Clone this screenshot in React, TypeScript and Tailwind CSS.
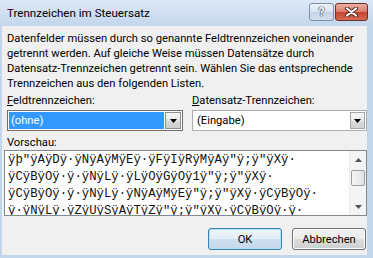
import React from "react";

function DownTri({ color = "#000" }: { color?: string }) {
  return (
    <svg width="7" height="4" viewBox="0 0 7 4">
      <path d="M0 0 H7 L3.5 4 Z" fill={color} />
    </svg>
  );
}

function UpTri({ color = "#000" }: { color?: string }) {
  return (
    <svg width="7" height="4" viewBox="0 0 7 4">
      <path d="M0 4 H7 L3.5 0 Z" fill={color} />
    </svg>
  );
}

export default function App() {
  const lines = [
    'ÿþ"ÿAÿDÿ·ÿNÿAÿMÿEÿ·ÿFÿIÿRÿMÿAÿ"ÿ;ÿ"ÿXÿ·',
    'ÿCÿBÿOÿ·ÿ·ÿNÿLÿ·ÿLÿOÿGÿOÿ1ÿ"ÿ;ÿ"ÿXÿ·',
    'ÿCÿBÿOÿ·ÿ·ÿNÿLÿ·ÿNÿAÿMÿEÿ"ÿ;ÿ"ÿXÿ·ÿCÿBÿOÿ·',
    'ÿ·ÿNÿLÿ·ÿZÿUÿSÿAÿTÿZÿ"ÿ;ÿ"ÿXÿ·ÿCÿBÿOÿ·ÿ·',
  ];
  return (
    <div className="w-[373px] h-[258px] overflow-hidden flex flex-col bg-[#c3d6ec] text-[11.2px] leading-[15px] text-black font-['Roboto',sans-serif] whitespace-nowrap">
      {/* title bar */}
      <div className="h-[26px] shrink-0 flex items-start bg-[linear-gradient(to_bottom,#dce8f5,#c3d6ec)] pl-[7px] pr-[5px]">
        <span className="mt-[6px] text-[11.6px]">Trennzeichen im Steuersatz</span>
        <div className="ml-auto mt-[3px] flex gap-[1px]">
          <div className="w-[25px] h-[18px] rounded-[3px] border border-[#7f91a9] bg-[linear-gradient(to_bottom,#eef3f9,#d8e3ef_50%,#c3d3e6_50%,#d3dfee)] flex items-center justify-center">
            <span className="font-bold text-[12px] leading-none text-white [text-shadow:0_0_1px_#2b3a4f,0_0_1px_#2b3a4f,0_0_1px_#2b3a4f]">
              ?
            </span>
          </div>
          <div className="w-[33px] h-[18px] rounded-[3px] border border-[#6e2e24] bg-[linear-gradient(to_bottom,#eab0a3,#d97a69_50%,#c4442f_50%,#d56a52)] flex items-center justify-center">
            <svg width="13" height="10" viewBox="0 0 13 10">
              <path d="M2 1.5 L11 8.5 M11 1.5 L2 8.5" stroke="#5b241c" strokeWidth="4" strokeLinecap="round" />
              <path d="M2 1.5 L11 8.5 M11 1.5 L2 8.5" stroke="#ffffff" strokeWidth="2.2" strokeLinecap="round" />
            </svg>
          </div>
        </div>
      </div>

      {/* client area */}
      <div className="flex-1 ml-[2px] mr-[6px] mb-[3px] bg-[#f0f0f0] flex flex-col pl-[5px] pt-[5px]">
        <p>
          Datenfelder müssen durch so genannte Feldtrennzeichen voneinander
          <br />
          getrennt werden. Auf gleiche Weise müssen Datensätze durch
          <br />
          Datensatz-Trennzeichen getrennt sein. Wählen Sie das entsprechende
          <br />
          Trennzeichen aus den folgenden Listen.
        </p>

        <div className="mt-[2px] flex gap-[9px]">
          <div className="w-[176px] flex flex-col">
            <span>
              <span className="underline">F</span>eldtrennzeichen:
            </span>
            <div className="mt-[2px] h-[21px] border border-[#6f6f6f] bg-white flex p-[1px] gap-[1px]">
              <div className="flex-1 bg-[#3399ff] text-white pl-[2px] flex items-center">(ohne)</div>
              <div className="w-[16px] border border-[#8e8f8f] bg-[linear-gradient(to_bottom,#f6f6f6,#e6e6e6_50%,#d9d9d9_50%,#cfcfcf)] flex items-center justify-center">
                <DownTri />
              </div>
            </div>
          </div>
          <div className="w-[175px] flex flex-col">
            <span>
              <span className="underline">D</span>atensatz-Trennzeichen:
            </span>
            <div className="mt-[2px] h-[21px] border border-[#abadb3] bg-white flex p-[1px]">
              <div className="flex-1 pl-[3px] flex items-center">(Eingabe)</div>
              <div className="w-[15px] border border-[#a6a6a6] bg-[linear-gradient(to_bottom,#f6f6f6,#e9e9e9_50%,#dcdcdc_50%,#d2d2d2)] flex items-center justify-center">
                <DownTri />
              </div>
            </div>
          </div>
        </div>

        <span className="mt-[4px]">Vorschau:</span>

        <div className="-ml-[3px] w-[363px] h-[66px] border border-[#828790] bg-white flex overflow-hidden">
          <div className="flex-1 overflow-hidden pl-[3px] pt-[1px] font-['Liberation_Mono',monospace] text-[12.3px] leading-[17px] whitespace-pre text-[#111]">
            {lines.map((l, i) => (
              <div key={i}>{l}</div>
            ))}
          </div>
          <div className="w-[17px] bg-[#f4f4f4] border-l border-[#ececec] flex flex-col">
            <div className="h-[17px] flex items-center justify-center pt-[1px]">
              <UpTri color="#555" />
            </div>
            <div className="mt-[2px] mx-[1px] h-[16px] rounded-[2px] border border-[#9d9d9d] bg-[linear-gradient(to_right,#f5f5f5,#e2e2e2)]" />
            <div className="flex-1" />
            <div className="h-[17px] flex items-center justify-center">
              <DownTri color="#555" />
            </div>
          </div>
        </div>

        <div className="mt-[12px] flex justify-end gap-[10px] pr-[1px]">
          <button className="w-[74px] h-[22px] rounded-[3px] border border-[#3c7fb1] bg-[linear-gradient(to_bottom,#eef5fb,#e2edf7_50%,#cfe0ef_50%,#c4d9ec)] shadow-[inset_0_0_0_1px_#aee3fb] flex items-center justify-center">
            OK
          </button>
          <button className="w-[74px] h-[22px] rounded-[3px] border border-[#707070] bg-[linear-gradient(to_bottom,#f2f2f2,#ebebeb_50%,#dddddd_50%,#cfcfcf)] shadow-[inset_0_0_0_1px_#fcfcfc] flex items-center justify-center">
            Abbrechen
          </button>
        </div>
      </div>
    </div>
  );
}
